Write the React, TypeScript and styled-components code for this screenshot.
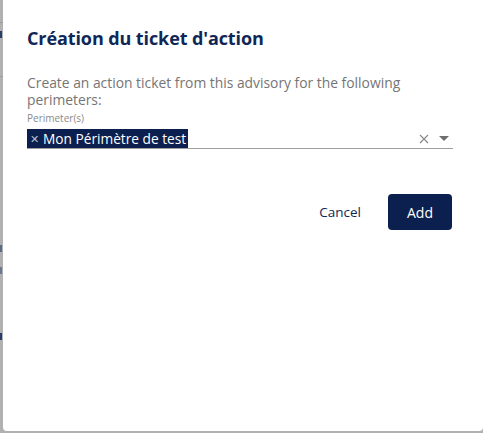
import React from "react";
import styled, { createGlobalStyle } from "styled-components";

const Global = createGlobalStyle`
  html, body { margin: 0; padding: 0; background: #b1b1b1; }
  body { font-family: "Open Sans", "Noto Sans", sans-serif; }
  #root { width: 483px; height: 433px; overflow: hidden; }
`;

const Stage = styled.div`
  display: flex;
  width: 483px;
  height: 433px;
  background: #b1b1b1;
`;

const PageEdge = styled.div`
  width: 3px;
  flex: none;
  display: flex;
  flex-direction: column;
`;

const EdgeRow = styled.div<{ $h: number; $line?: boolean; $mark?: string }>`
  height: ${(p) => p.$h}px;
  flex: none;
  position: relative;
  border-bottom: ${(p) => (p.$line ? "1px solid #9c9c9c" : "none")};
  &::after {
    content: "";
    display: ${(p) => (p.$mark ? "block" : "none")};
    position: absolute;
    left: 0;
    bottom: 3px;
    width: 2px;
    height: 7px;
    background: ${(p) => p.$mark || "transparent"};
  }
`;

const Dialog = styled.div`
  flex: none;
  width: 480px;
  height: 431px;
  background: #fff;
  border-radius: 0 0 4px 4px;
  box-sizing: border-box;
  padding: 24px 30px 0 24px;
  display: flex;
  flex-direction: column;
`;

const Title = styled.h2`
  margin: 0;
  font-size: 18px;
  font-weight: 700;
  color: #0f2756;
  line-height: 28px;
  letter-spacing: -0.1px;
`;

const Body = styled.div`
  margin-top: 22px;
  display: flex;
  flex-direction: column;
`;

const Description = styled.p`
  margin: 0;
  font-size: 13.85px;
  line-height: 17px;
  color: #757575;
  width: 380px;
`;

const FieldLabel = styled.label`
  margin-top: 3px;
  font-size: 10px;
  line-height: 14px;
  color: #8a8a8a;
`;

const Field = styled.div`
  margin-top: 4px;
  display: flex;
  align-items: center;
  height: 19px;
  border-bottom: 1px solid #9e9e9e;
`;

const Chip = styled.span`
  display: inline-flex;
  align-items: center;
  gap: 4px;
  height: 19px;
  padding: 0 2px 0 3px;
  background: #0c2050;
  color: #fff;
  font-size: 13.7px;
  line-height: 19px;
`;

const ChipRemove = styled.span`
  font-size: 11px;
  color: #b9c0cf;
  line-height: 1;
`;

const Spacer = styled.div`
  flex: 1;
`;

const FieldIcons = styled.div`
  display: flex;
  align-items: center;
  gap: 10px;
  padding-right: 4px;
`;

const Actions = styled.div`
  margin-top: 45px;
  display: flex;
  justify-content: flex-end;
  align-items: center;
  gap: 27px;
  padding-right: 1px;
`;

const TextButton = styled.button`
  border: none;
  background: none;
  padding: 0;
  font-family: inherit;
  font-size: 13.5px;
  color: #0f2756;
`;

const PrimaryButton = styled.button`
  border: none;
  border-radius: 4px;
  width: 64px;
  height: 36px;
  background: #0c2050;
  color: #fff;
  font-family: inherit;
  font-size: 14px;
`;

export default function App() {
  return (
    <>
      <Global />
      <Stage>
        <PageEdge>
          <EdgeRow $h={22} $line />
          <EdgeRow $h={18} $mark="#2b3f6b" />
          <EdgeRow $h={35} $line />
          <EdgeRow $h={150} />
          <EdgeRow $h={28} $mark="#5a6a8a" />
          <EdgeRow $h={22} $mark="#6a7894" />
          <EdgeRow $h={21} />
          <EdgeRow $h={45} $mark="#283c68" />
        </PageEdge>
        <Dialog>
          <Title>Création du ticket d'action</Title>
          <Body>
            <Description>
              Create an action ticket from this advisory for the following perimeters:
            </Description>
            <FieldLabel>Perimeter(s)</FieldLabel>
            <Field>
              <Chip>
                <ChipRemove>✕</ChipRemove>
                Mon Périmètre de test
              </Chip>
              <Spacer />
              <FieldIcons>
                <svg width="10" height="10" viewBox="0 0 10 10">
                  <path d="M1 1 L9 9 M9 1 L1 9" stroke="#8a8a8a" strokeWidth="1.2" />
                </svg>
                <svg width="10" height="6" viewBox="0 0 10 6">
                  <path d="M0 0 L10 0 L5 5 Z" fill="#6e6e6e" />
                </svg>
              </FieldIcons>
            </Field>
          </Body>
          <Actions>
            <TextButton>Cancel</TextButton>
            <PrimaryButton>Add</PrimaryButton>
          </Actions>
        </Dialog>
      </Stage>
    </>
  );
}
